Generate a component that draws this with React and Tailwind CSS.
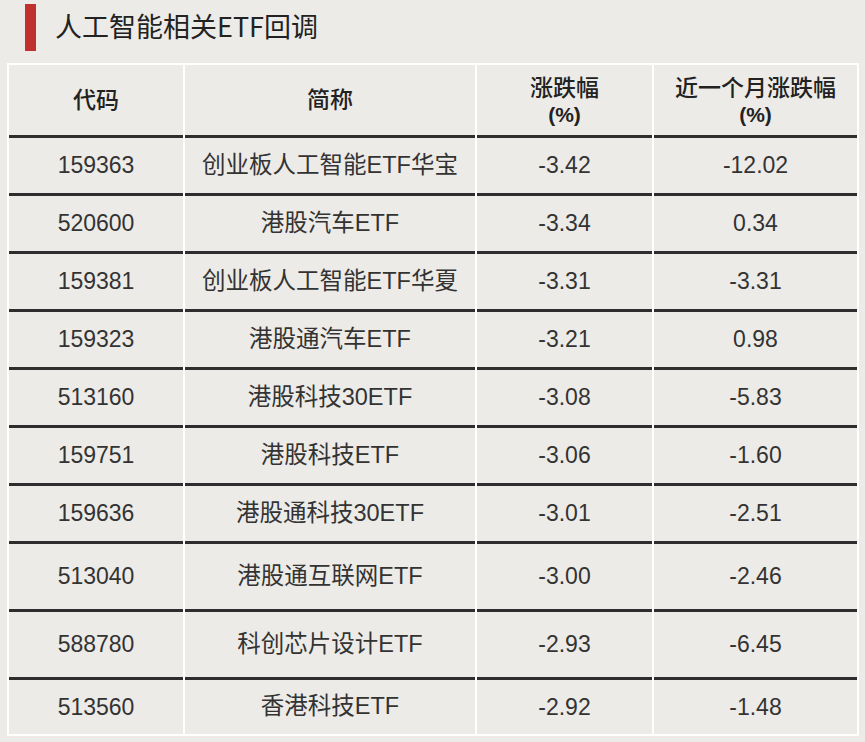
import React from "react";

const rows = [
  ["159363", "创业板人工智能ETF华宝", "-3.42", "-12.02", "h-[55px]"],
  ["520600", "港股汽车ETF", "-3.34", "0.34", "h-[55px]"],
  ["159381", "创业板人工智能ETF华夏", "-3.31", "-3.31", "h-[55px]"],
  ["159323", "港股通汽车ETF", "-3.21", "0.98", "h-[55px]"],
  ["513160", "港股科技30ETF", "-3.08", "-5.83", "h-[55px]"],
  ["159751", "港股科技ETF", "-3.06", "-1.60", "h-[55px]"],
  ["159636", "港股通科技30ETF", "-3.01", "-2.51", "h-[55px]"],
  ["513040", "港股通互联网ETF", "-3.00", "-2.46", "h-[65px]"],
  ["588780", "科创芯片设计ETF", "-2.93", "-6.45", "h-[65px]"],
  ["513560", "香港科技ETF", "-2.92", "-1.48", "h-[54px]"],
];

const font = { fontFamily: '"Liberation Sans", "Noto Sans CJK SC", sans-serif' };
const cjk = { fontFamily: '"Noto Sans CJK SC", sans-serif' };

export default function App() {
  return (
    <div className="w-[865px] h-[742px] bg-[#edebe7] overflow-hidden" style={font}>
      <div className="flex items-center h-[52px] pt-[2px]">
        <div className="ml-[25px] w-[11px] h-[47px] bg-[#c0302d]" />
        <div className="ml-[19px] text-[27px] leading-none text-[#222] mb-[4px]" style={cjk}>
          人工智能相关ETF回调
        </div>
      </div>
      <div className="ml-[7px] mt-[11px] w-[852px] bg-white p-[2px]">
        <div className="grid grid-cols-[174px_290px_175px_203px] gap-x-[2px] bg-white">
          {[
            ["代码"],
            ["简称"],
            ["涨跌幅", "(%)"],
            ["近一个月涨跌幅", "(%)"],
          ].map((h, i) => (
            <div
              key={i}
              className="h-[73px] bg-[#edebe7] border-b-[3px] border-[#2e2e2e] flex flex-col items-center justify-center pb-[3px] text-[#222]"
            >
              <div className="text-[23px] leading-[33px] font-medium" style={cjk}>
                {h[0]}
              </div>
              {h[1] && (
                <div className="text-[21px] leading-[24px] font-bold" style={font}>
                  {h[1]}
                </div>
              )}
            </div>
          ))}
          {rows.map((r, ri) => {
            const last = ri === rows.length - 1;
            return [r[0], r[1], r[2], r[3]].map((c, ci) => (
              <div
                key={ri + "-" + ci}
                className={
                  "bg-[#edebe7] flex items-center justify-center text-[#333] " +
                  (ci === 1 ? "text-[23.5px] " : "text-[23px] ") +
                  r[4] +
                  (last ? "" : " border-b-[3px] border-[#2e2e2e] box-content")
                }
              >
                {c}
              </div>
            ));
          })}
        </div>
      </div>
    </div>
  );
}
